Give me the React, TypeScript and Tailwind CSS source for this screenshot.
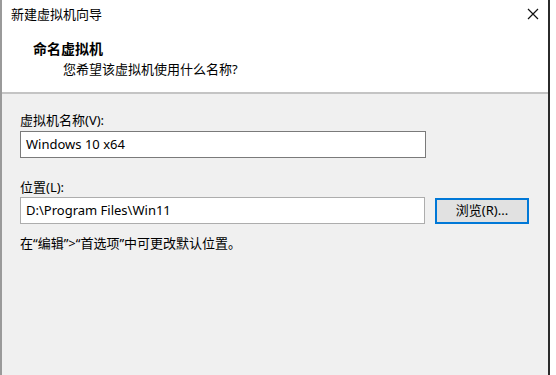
export default function App() {
  return (
    <div
      className="flex w-[556px] h-[375px] bg-white text-[13px] text-black overflow-hidden"
      style={{ fontFamily: '"Noto Sans", "Noto Sans CJK SC", sans-serif' }}
    >
      {/* Window */}
      <div className="flex flex-col w-[550px] h-full border-l-2 border-l-[#9a9a9a] border-r-2 border-r-[#2b2b2b]">
        {/* Header */}
        <div className="bg-white h-[92px] shrink-0 border-b-2 border-[#c4c4c4] box-content">
          <div className="flex items-center justify-between h-[28px] pl-[9px] pr-[9px]">
            <span className="leading-none">新建虚拟机向导</span>
            <svg width="12" height="12" viewBox="0 0 12 12" className="shrink-0 text-[#111]">
              <path d="M1 1 L11 11 M11 1 L1 11" stroke="currentColor" strokeWidth="1.2" fill="none" />
            </svg>
          </div>
          <div className="pl-[31px] mt-[12px] font-bold text-[14px] leading-[18px]">命名虚拟机</div>
          <div className="pl-[61px] mt-[2px] leading-[18px]">您希望该虚拟机使用什么名称?</div>
        </div>

        {/* Body */}
        <div className="flex-1 bg-[#f0f0f0] pl-[18px] pt-[17px]">
          <div className="leading-[18px]">虚拟机名称(V):</div>
          <div className="mt-[2px] w-[406px] h-[27px] bg-white border border-[#7a7a7a] flex items-center px-[5px]">
            Windows 10 x64
          </div>

          <div className="mt-[20px] leading-[18px]">位置(L):</div>
          <div className="mt-px flex items-center gap-[10px]">
            <div className="w-[405px] h-[27px] bg-white border border-[#adadad] flex items-center px-[5px]">
              D:\Program Files\Win11
            </div>
            <button className="w-[94px] h-[26px] bg-[#e1e1e1] border-2 border-[#0078d7] flex items-center justify-center">
              浏览(R)...
            </button>
          </div>

          <div className="mt-[10px] leading-[18px]">在“编辑”&gt;“首选项”中可更改默认位置。</div>
        </div>
      </div>
      <div className="flex-1 bg-white" />
    </div>
  );
}
